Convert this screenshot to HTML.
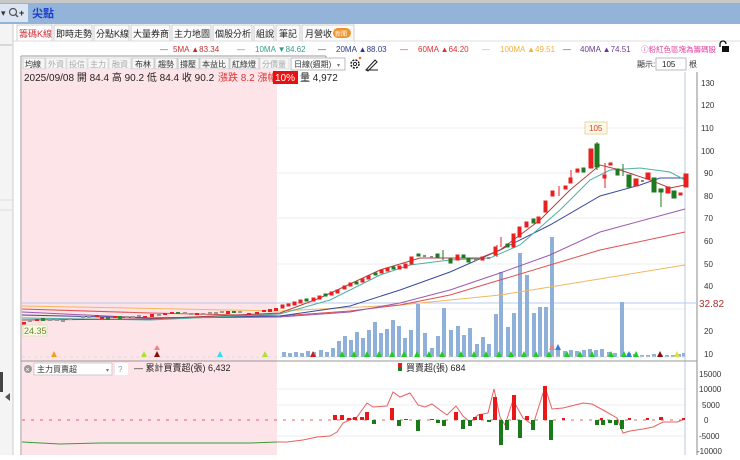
<!DOCTYPE html>
<html><head><meta charset="utf-8"><style>
body{margin:0;width:740px;height:455px;overflow:hidden;background:#fff;font-family:"Liberation Sans","Noto Sans CJK TC",sans-serif;}
svg text{font-family:"Liberation Sans","Noto Sans CJK TC",sans-serif;}
</style></head><body>
<svg width="740" height="455" viewBox="0 0 740 455" xmlns="http://www.w3.org/2000/svg">
<rect x="0" y="0" width="740" height="3" fill="#c8c8c8"/>
<rect x="0" y="3" width="740" height="21" fill="#94b3d9"/>
<rect x="0" y="4" width="28" height="18" fill="#dce6f2"/>
<text x="1" y="16" font-size="9" fill="#333">▾</text>
<circle cx="13" cy="12" r="3.5" fill="none" stroke="#555" stroke-width="1.2"/>
<line x1="15.5" y1="14.5" x2="18" y2="17" stroke="#555" stroke-width="1.5"/>
<text x="19" y="16" font-size="9" font-weight="bold" fill="#222">+</text>
<text x="32" y="17" font-size="11" font-weight="bold" fill="#1a3fd0">尖點</text>
<rect x="0" y="24" width="13" height="431" fill="#f4f4f4"/>
<line x1="13" y1="24" x2="13" y2="455" stroke="#ccc"/>
<rect x="0" y="372" width="3" height="20" fill="#444"/>
<path d="M10 393 L5 397 L10 401Z" fill="#555"/>
<line x1="0" y1="45" x2="12" y2="45" stroke="#bbb"/>
<line x1="0" y1="200" x2="12" y2="200" stroke="#ddd"/>
<line x1="0" y1="210" x2="12" y2="210" stroke="#ddd"/>
<g font-size="9" fill="#222">
<rect x="17" y="25" width="35" height="16" fill="#fff" stroke="#ccc"/><text x="19" y="37" fill="#d0303a">籌碼K線</text>
<rect x="54" y="25" width="38" height="16" fill="#fafafa" stroke="#ccc"/><text x="56" y="37">即時走勢</text>
<rect x="94" y="25" width="35" height="16" fill="#fafafa" stroke="#ccc"/><text x="96" y="37">分點K線</text>
<rect x="131" y="25" width="39" height="16" fill="#fafafa" stroke="#ccc"/><text x="133" y="37">大量券商</text>
<rect x="172" y="25" width="39" height="16" fill="#fafafa" stroke="#ccc"/><text x="174" y="37">主力地圖</text>
<rect x="213" y="25" width="39" height="16" fill="#fafafa" stroke="#ccc"/><text x="215" y="37">個股分析</text>
<rect x="254" y="25" width="20" height="16" fill="#fafafa" stroke="#ccc"/><text x="256" y="37">組說</text>
<rect x="276" y="25" width="24" height="16" fill="#fafafa" stroke="#ccc"/><text x="279" y="37">筆記</text>
<rect x="302" y="25" width="52" height="16" fill="#fafafa" stroke="#ccc"/><text x="305" y="37">月營收</text>
<rect x="333" y="28" width="18" height="10" rx="5" fill="#f0922a"/><text x="335" y="36" font-size="6" fill="#fff">新聞</text>
</g>
<line x1="13" y1="41" x2="740" y2="41" stroke="#ddd"/>
<g font-size="8">
<text x="160" y="52" fill="#c03030">—</text><text x="173" y="52" fill="#c03030">5MA ▲83.34</text>
<text x="237" y="52" fill="#3a9a8a">—</text><text x="255" y="52" fill="#3a9a8a">10MA ▼84.62</text>
<text x="318" y="52" fill="#2a3a8a">—</text><text x="336" y="52" fill="#2a3a8a">20MA ▲88.03</text>
<text x="400" y="52" fill="#e03030">—</text><text x="418" y="52" fill="#e03030">60MA ▲64.20</text>
<text x="482" y="52" fill="#f0b040">—</text><text x="500" y="52" fill="#f0b040">100MA ▲49.51</text>
<text x="563" y="52" fill="#6a3a8a">—</text><text x="580" y="52" fill="#6a3a8a">40MA ▲74.51</text>
<text x="641" y="52" fill="#e040a0" font-size="7.5">ⓘ粉紅色區塊為籌碼股</text>
</g>
<rect x="722" y="46" width="7" height="6" fill="#111"/><path d="M720 47 v-3 a3 3 0 0 1 6 0" fill="none" stroke="#111" stroke-width="1.3"/>
<rect x="21" y="56" width="306" height="14" fill="#fff"/>
<line x1="21" y1="56" x2="326" y2="56" stroke="#999"/>
<line x1="21" y1="56" x2="21" y2="455" stroke="#999"/>
<line x1="326" y1="56" x2="326" y2="60" stroke="#999"/>
<rect x="22" y="70" width="255" height="385" fill="#fde4e8"/>
<g font-size="8" fill="#333">
<rect x="23" y="58" width="22" height="11" fill="#f6f6f6" stroke="#ccc"/><text x="25" y="67">均線</text>
<rect x="46" y="58" width="20" height="11" fill="#f6f6f6" stroke="#ddd"/><text x="48" y="67" fill="#aaa">外資</text>
<rect x="67" y="58" width="20" height="11" fill="#f6f6f6" stroke="#ddd"/><text x="69" y="67" fill="#aaa">投信</text>
<rect x="88" y="58" width="20" height="11" fill="#f6f6f6" stroke="#ddd"/><text x="90" y="67" fill="#aaa">主力</text>
<rect x="109" y="58" width="22" height="11" fill="#f6f6f6" stroke="#ddd"/><text x="112" y="67" fill="#aaa">融資</text>
<rect x="132" y="58" width="22" height="11" fill="#f6f6f6" stroke="#ccc"/><text x="135" y="67">布林</text>
<rect x="155" y="58" width="22" height="11" fill="#f6f6f6" stroke="#ccc"/><text x="158" y="67">趨勢</text>
<rect x="178" y="58" width="21" height="11" fill="#f6f6f6" stroke="#ccc"/><text x="180" y="67">撐壓</text>
<rect x="200" y="58" width="29" height="11" fill="#f6f6f6" stroke="#ccc"/><text x="202" y="67">本益比</text>
<rect x="230" y="58" width="29" height="11" fill="#f6f6f6" stroke="#ccc"/><text x="232" y="67">紅綠燈</text>
<rect x="260" y="58" width="29" height="11" fill="#f6f6f6" stroke="#ddd"/><text x="262" y="67" fill="#aaa">分價量</text>
<rect x="291" y="58" width="54" height="12" fill="#fff" stroke="#bbb"/><text x="294" y="67">日線(週期)</text><text x="337" y="67" font-size="6" fill="#777">▾</text>
</g>
<circle cx="355" cy="64" r="4" fill="none" stroke="#222" stroke-width="1.5" stroke-dasharray="2 1.2"/><circle cx="355" cy="64" r="1.6" fill="none" stroke="#222"/>
<circle cx="360" cy="58" r="1.3" fill="#f07020"/>
<path d="M366 70 L375 60 L377 62 L368 71Z M366 70 L378 70" fill="none" stroke="#222" stroke-width="1.1"/>
<text x="637" y="67" font-size="8" fill="#333">顯示:</text>
<rect x="656" y="58" width="30" height="12" fill="#fff" stroke="#bbb"/><text x="662" y="67" font-size="8" fill="#222">105</text>
<text x="689" y="67" font-size="8" fill="#333">根</text>
<g font-size="10" fill="#222">
<text x="24" y="81">2025/09/08 開 84.4 高 90.2 低 84.4 收 90.2</text>
<text x="218" y="81" fill="#e03030">漲跌 8.2 漲幅</text>
<rect x="273" y="71" width="25" height="13" fill="#e81010"/><text x="275" y="81" fill="#fff">10%</text>
<text x="300" y="81">量 4,972</text>
</g>
<g stroke="#eee">
<line x1="277" y1="128" x2="685" y2="128"/><line x1="277" y1="173" x2="685" y2="173"/><line x1="277" y1="218" x2="685" y2="218"/><line x1="277" y1="264" x2="685" y2="264"/><line x1="277" y1="309" x2="685" y2="309"/>
<line x1="277" y1="389" x2="685" y2="389"/><line x1="277" y1="405" x2="685" y2="405"/><line x1="277" y1="436" x2="685" y2="436"/>
</g>
<line x1="685" y1="72" x2="685" y2="455" stroke="#b8c8e0"/>
<line x1="697" y1="72" x2="697" y2="455" stroke="#888"/>
<line x1="22" y1="303" x2="697" y2="303" stroke="#b8c8f0"/>
<g font-size="8" fill="#333">
<text x="701" y="86">130</text><text x="701" y="108">120</text><text x="701" y="131">110</text><text x="701" y="154">100</text><text x="704" y="176">90</text><text x="704" y="199">80</text><text x="704" y="221">70</text><text x="704" y="244">60</text><text x="704" y="267">50</text><text x="704" y="289">40</text><text x="704" y="334">20</text><text x="704" y="357">10</text>
<text x="699" y="377">15000</text><text x="699" y="392">10000</text><text x="702" y="408">5000</text><text x="704" y="423">0</text><text x="699" y="439">-5000</text><text x="697" y="454">-10000</text>
</g>
<text x="699" y="307" font-size="10" fill="#b03030">32.82</text>
<g fill="#8fb0d8">
<rect x="282" y="352" width="4" height="5"/><rect x="288" y="353" width="4" height="4"/><rect x="294" y="352" width="4" height="5"/><rect x="300" y="353" width="4" height="4"/><rect x="306" y="351" width="4" height="6"/><rect x="312" y="352" width="4" height="5"/><rect x="319" y="350" width="4" height="7"/><rect x="325" y="352" width="4" height="5"/><rect x="331" y="348" width="4" height="9"/>
<rect x="337" y="341" width="4" height="16"/><rect x="343" y="336" width="4" height="21"/><rect x="349" y="340" width="4" height="17"/><rect x="355" y="332" width="4" height="25"/><rect x="361" y="338" width="4" height="19"/><rect x="367" y="330" width="4" height="27"/><rect x="373" y="322" width="4" height="35"/><rect x="379" y="333" width="4" height="24"/><rect x="385" y="329" width="4" height="28"/><rect x="391" y="320" width="4" height="37"/><rect x="397" y="326" width="4" height="31"/>
<rect x="403" y="338" width="4" height="19"/><rect x="409" y="330" width="4" height="27"/><rect x="416" y="304" width="4" height="53"/><rect x="423" y="333" width="4" height="24"/><rect x="430" y="348" width="4" height="9"/><rect x="436" y="336" width="4" height="21"/><rect x="442" y="308" width="4" height="49"/><rect x="449" y="330" width="4" height="27"/><rect x="456" y="326" width="4" height="31"/><rect x="462" y="335" width="4" height="22"/><rect x="468" y="328" width="4" height="29"/><rect x="475" y="344" width="4" height="13"/><rect x="481" y="337" width="4" height="20"/><rect x="487" y="344" width="4" height="13"/>
<rect x="494" y="314" width="4" height="43"/><rect x="499" y="272" width="4" height="85"/><rect x="506" y="327" width="4" height="30"/><rect x="512" y="313" width="4" height="44"/><rect x="518" y="253" width="4" height="104"/><rect x="525" y="275" width="4" height="82"/><rect x="532" y="313" width="4" height="44"/><rect x="538" y="307" width="4" height="50"/><rect x="544" y="307" width="4" height="50"/><rect x="550" y="237" width="4" height="120"/>
<rect x="556" y="348" width="4" height="9"/><rect x="563" y="351" width="4" height="6"/><rect x="569" y="350" width="4" height="7"/><rect x="575" y="351" width="4" height="6"/><rect x="582" y="350" width="4" height="7"/><rect x="588" y="349" width="4" height="8"/><rect x="594" y="350" width="4" height="7"/><rect x="600" y="349" width="4" height="8"/><rect x="607" y="352" width="4" height="5"/><rect x="613" y="353" width="4" height="4"/><rect x="620" y="302" width="4" height="55"/><rect x="627" y="353" width="4" height="4"/><rect x="633" y="354" width="4" height="3"/><rect x="640" y="355" width="4" height="2"/><rect x="646" y="355" width="4" height="2"/><rect x="652" y="354" width="4" height="3"/><rect x="659" y="355" width="4" height="2"/><rect x="665" y="355" width="4" height="2"/><rect x="671" y="355" width="4" height="2"/><rect x="677" y="354" width="4" height="3"/><rect x="682" y="353" width="3" height="4"/>
</g>
<line x1="22" y1="357" x2="685" y2="357" stroke="#ddd" stroke-dasharray="3 3"/>
<g fill="#22cc22">
<path d="M339 357l3-6 3 6z M351 357l3-6 3 6z M364 357l3-6 3 6z M376 357l3-6 3 6z M389 357l3-6 3 6z M401 357l3-6 3 6z M414 357l3-6 3 6z M426 357l3-6 3 6z M439 357l3-6 3 6z M458 357l3-6 3 6z M471 357l3-6 3 6z M483 357l3-6 3 6z M496 357l3-6 3 6z M508 357l3-6 3 6z M521 357l3-6 3 6z M533 357l3-6 3 6z M546 357l3-6 3 6z M564 357l3-6 3 6z M577 357l3-6 3 6z M589 357l3-6 3 6z M608 357l3-6 3 6z M621 357l3-6 3 6z M633 357l3-6 3 6z"/>
</g>
<path d="M51 357l3-6 3 6z" fill="#f0a020"/><path d="M141 357l3-6 3 6z" fill="#aee030"/><path d="M154 357l3-6 3 6z" fill="#8a1010"/><path d="M154 350l3-5 3 5z" fill="#f08080"/><path d="M217 357l3-6 3 6z" fill="#30e0f0"/><path d="M262 357l3-6 3 6z" fill="#aee030"/><path d="M549 350l3-6 3 6z" fill="#f08080"/><path d="M555 350l3-6 3 6z" fill="#3080e0"/><path d="M657 357l3-6 3 6z" fill="#8a1010"/><path d="M674 357l3-6 3 6z" fill="#dde040"/><path d="M626 357l3-6 3 6z" fill="#3080e0"/><path d="M310 357l3-6 3 6z" fill="#cc2020"/>
<g fill="none" stroke-width="1">
<polyline stroke="#f0b860" points="22,306 280,311 400,305 500,295 550,287 685,265"/>
<polyline stroke="#e05050" points="22,309 150,313 280,316 350,311 400,305 450,295 500,280 600,250 685,232"/>
<polyline stroke="#9a5ab0" points="22,312 150,318 280,317 350,312 400,303 450,290 500,273 550,255 600,232 685,209"/>
<polyline stroke="#3a4aa0" points="22,315 150,318 280,316 350,306 400,290 450,272 500,250 550,225 600,196 640,185 660,178 685,178"/>
<polyline stroke="#50b0a0" points="22,318 150,320 280,314 330,300 380,275 410,265 450,260 490,258 520,245 560,210 590,180 610,170 640,168 670,172 685,180"/>
<polyline stroke="#b04040" points="22,320 150,319 280,313 320,298 380,270 420,258 480,258 500,250 540,220 570,190 600,165 620,170 650,180 670,188 685,185"/>
</g>
<g fill="#e82020">
<rect x="22" y="322" width="4" height="3"/><rect x="35" y="319" width="4" height="2"/><rect x="95" y="315" width="4" height="2"/><rect x="100" y="317" width="4" height="2"/><rect x="113" y="316" width="4" height="2"/><rect x="143" y="316" width="4" height="2"/><rect x="150" y="314" width="4" height="3"/><rect x="163" y="313" width="4" height="2"/><rect x="170" y="312" width="4" height="2"/><rect x="195" y="313" width="4" height="2"/><rect x="226" y="311" width="4" height="3"/><rect x="247" y="313" width="4" height="2"/><rect x="255" y="312" width="4" height="2"/><rect x="262" y="310" width="4" height="2"/><rect x="268" y="309" width="4" height="3"/><rect x="274" y="308" width="4" height="3"/>
</g>
<g fill="#2a8a2a">
<rect x="41" y="318" width="4" height="3"/><rect x="106" y="317" width="4" height="3"/><rect x="118" y="316" width="4" height="3"/><rect x="176" y="312" width="4" height="2"/><rect x="232" y="311" width="4" height="2"/>
</g>
<g fill="#999"><rect x="28" y="320" width="4" height="2"/><rect x="48" y="319" width="4" height="2"/><rect x="55" y="319" width="4" height="2"/><rect x="61" y="320" width="4" height="2"/><rect x="68" y="318" width="4" height="2"/><rect x="81" y="316" width="4" height="2"/><rect x="87" y="316" width="4" height="2"/><rect x="125" y="316" width="4" height="2"/><rect x="131" y="316" width="4" height="2"/><rect x="137" y="315" width="4" height="2"/><rect x="157" y="314" width="4" height="2"/><rect x="183" y="312" width="4" height="2"/><rect x="189" y="313" width="4" height="2"/><rect x="201" y="313" width="4" height="2"/><rect x="208" y="312" width="4" height="2"/><rect x="214" y="312" width="4" height="2"/><rect x="220" y="311" width="4" height="2"/><rect x="238" y="311" width="4" height="2"/></g>
<rect x="23" y="325" width="24" height="11" fill="#fafae0" stroke="#e0e0c0"/><text x="24" y="334" font-size="9" fill="#6a8a3a">24.35</text>
<g fill="#e82020" stroke="#e82020" stroke-width="1">
<rect x="281" y="305" width="3" height="3"/><rect x="287" y="304" width="3" height="2"/><rect x="293" y="302" width="3" height="3"/><rect x="299" y="300" width="3" height="3"/><rect x="312" y="298" width="3" height="3"/><rect x="318" y="296" width="3" height="3"/><rect x="330" y="292" width="3" height="3"/><rect x="336" y="290" width="3" height="3"/><rect x="343" y="286" width="3" height="3"/><rect x="349" y="283" width="3" height="3"/><rect x="361" y="279" width="3" height="3"/><rect x="367" y="276" width="3" height="3"/><rect x="380" y="270" width="3" height="3"/><rect x="386" y="268" width="3" height="3"/><rect x="398" y="266" width="3" height="3"/>
<rect x="404" y="264" width="3" height="4"/><rect x="410" y="257" width="3" height="7"/><rect x="456" y="255" width="3" height="5"/><rect x="481" y="257" width="3" height="3"/>
<line x1="497" y1="245" x2="497" y2="257"/><rect x="494" y="247" width="3" height="8"/><line x1="501" y1="237" x2="501" y2="247"/>
<rect x="512" y="234" width="3" height="13"/><rect x="518" y="227" width="3" height="10"/><rect x="525" y="222" width="3" height="5"/><rect x="537" y="217" width="3" height="6"/><rect x="544" y="201" width="3" height="11"/><rect x="551" y="191" width="3" height="5"/><line x1="559" y1="186" x2="559" y2="196"/><rect x="564" y="186" width="3" height="3"/><line x1="571" y1="170" x2="571" y2="183"/><rect x="569" y="178" width="3" height="5"/><rect x="576" y="169" width="3" height="3"/>
<rect x="589" y="149" width="4" height="19"/><line x1="605" y1="163" x2="605" y2="188"/><rect x="603" y="175" width="3" height="3"/><rect x="609" y="163" width="3" height="2"/><rect x="634" y="179" width="4" height="7"/><rect x="646" y="173" width="4" height="6"/><rect x="666" y="187" width="4" height="6"/><rect x="679" y="193" width="3" height="2"/><rect x="684" y="174" width="4" height="13"/>
</g>
<g fill="#1f7a1f" stroke="#1f7a1f" stroke-width="1">
<rect x="305" y="299" width="3" height="2"/><rect x="324" y="294" width="3" height="2"/><rect x="355" y="282" width="3" height="2"/><rect x="374" y="273" width="3" height="2"/><rect x="392" y="267" width="3" height="2"/>
<rect x="417" y="254" width="3" height="2"/><rect x="436" y="254" width="3" height="3"/><line x1="443" y1="250" x2="443" y2="260"/><rect x="449" y="259" width="3" height="4"/><rect x="462" y="255" width="3" height="3"/><rect x="467" y="258" width="3" height="4"/><rect x="506" y="244" width="3" height="3"/><rect x="532" y="219" width="3" height="4"/><rect x="582" y="168" width="3" height="4"/>
<line x1="597" y1="142" x2="597" y2="170"/><rect x="595" y="144" width="4" height="23"/><rect x="616" y="169" width="3" height="6"/><line x1="623" y1="164" x2="623" y2="176"/><rect x="627" y="175" width="4" height="12"/><rect x="652" y="178" width="4" height="14"/><line x1="661" y1="189" x2="661" y2="207"/><rect x="659" y="189" width="4" height="3"/><rect x="672" y="191" width="4" height="7"/>
</g>
<g fill="#888"><rect x="423" y="255" width="3" height="2"/><rect x="430" y="256" width="3" height="2"/><rect x="474" y="259" width="3" height="2"/><rect x="487" y="257" width="3" height="2"/><rect x="641" y="180" width="3" height="2"/></g>
<rect x="585" y="122" width="22" height="12" fill="#fdf8e8" stroke="#e8d8a0"/><text x="589" y="131" font-size="8" fill="#e04020">105</text>
<line x1="21" y1="361" x2="697" y2="361" stroke="#999"/>
<circle cx="28" cy="369" r="4" fill="#999"/><text x="25.5" y="372" font-size="7" fill="#fff">×</text>
<rect x="34" y="363" width="78" height="12" fill="#fff" stroke="#ccc"/><text x="37" y="372" font-size="8" fill="#333">主力買賣超</text><text x="106" y="372" font-size="6" fill="#777">▾</text>
<rect x="115" y="363" width="13" height="12" fill="#fff"/><text x="118" y="372" font-size="8" fill="#7a9ad0">?</text>
<text x="134" y="371" font-size="9" fill="#222">— 累計買賣超(張) 6,432</text>
<rect x="398" y="363" width="4" height="4" fill="#e02020"/><rect x="398" y="367" width="4" height="4" fill="#1f7a1f"/>
<text x="406" y="371" font-size="9" fill="#222">買賣超(張) 684</text>
<line x1="22" y1="420" x2="685" y2="420" stroke="#e82020" stroke-dasharray="3 6" opacity=".7"/>
<polyline fill="none" stroke="#3a9a3a" stroke-width="1" points="22,442 60,444 100,443 150,443 200,443 250,443 277,442"/>
<polyline fill="none" stroke="#e86060" stroke-width="1" points="277,442 287,442 303,440 317,437 330,436 337,432 343,423 357,417 367,403 373,407 387,406 393,392 400,397 410,393 418,405 425,407 432,404 440,410 447,415 456,406 463,416 470,422 478,415 488,413 494,389 500,417 505,425 513,400 523,418 533,425 545,387 552,409 563,408 583,403 592,404 603,410 617,418 623,433 630,431 643,429 653,427 663,422 677,422 685,419"/>
<g fill="#e81818">
<rect x="333" y="415" width="4" height="5"/><rect x="340" y="415" width="4" height="5"/><rect x="347" y="418" width="4" height="2"/><rect x="353" y="417" width="4" height="3"/><rect x="360" y="417" width="4" height="3"/><rect x="365" y="412" width="4" height="8"/><rect x="390" y="408" width="4" height="12"/><rect x="404" y="419" width="4" height="1"/><rect x="430" y="419" width="4" height="1"/><rect x="454" y="412" width="4" height="8"/><rect x="473" y="417" width="4" height="3"/><rect x="479" y="414" width="4" height="6"/><rect x="493" y="397" width="4" height="23"/><rect x="512" y="395" width="4" height="25"/><rect x="525" y="416" width="4" height="4"/><rect x="543" y="386" width="4" height="34"/><rect x="562" y="418" width="3" height="2"/><rect x="600" y="418" width="3" height="2"/><rect x="628" y="418" width="3" height="2"/><rect x="646" y="418" width="3" height="2"/><rect x="659" y="417" width="4" height="3"/><rect x="682" y="418" width="3" height="2"/>
</g>
<g fill="#1a7a1a">
<rect x="372" y="420" width="4" height="4"/><rect x="397" y="420" width="4" height="6"/><rect x="416" y="420" width="4" height="11"/><rect x="436" y="420" width="4" height="3"/><rect x="442" y="420" width="4" height="6"/><rect x="461" y="420" width="4" height="9"/><rect x="468" y="420" width="4" height="6"/><rect x="487" y="420" width="4" height="2"/><rect x="499" y="420" width="4" height="25"/><rect x="505" y="420" width="4" height="10"/><rect x="518" y="420" width="4" height="18"/><rect x="531" y="420" width="4" height="10"/><rect x="549" y="420" width="4" height="20"/><rect x="595" y="420" width="4" height="5"/><rect x="601" y="420" width="4" height="5"/><rect x="608" y="420" width="4" height="3"/><rect x="614" y="420" width="4" height="5"/><rect x="620" y="420" width="4" height="9"/>
</g>
</svg>
</body></html>
